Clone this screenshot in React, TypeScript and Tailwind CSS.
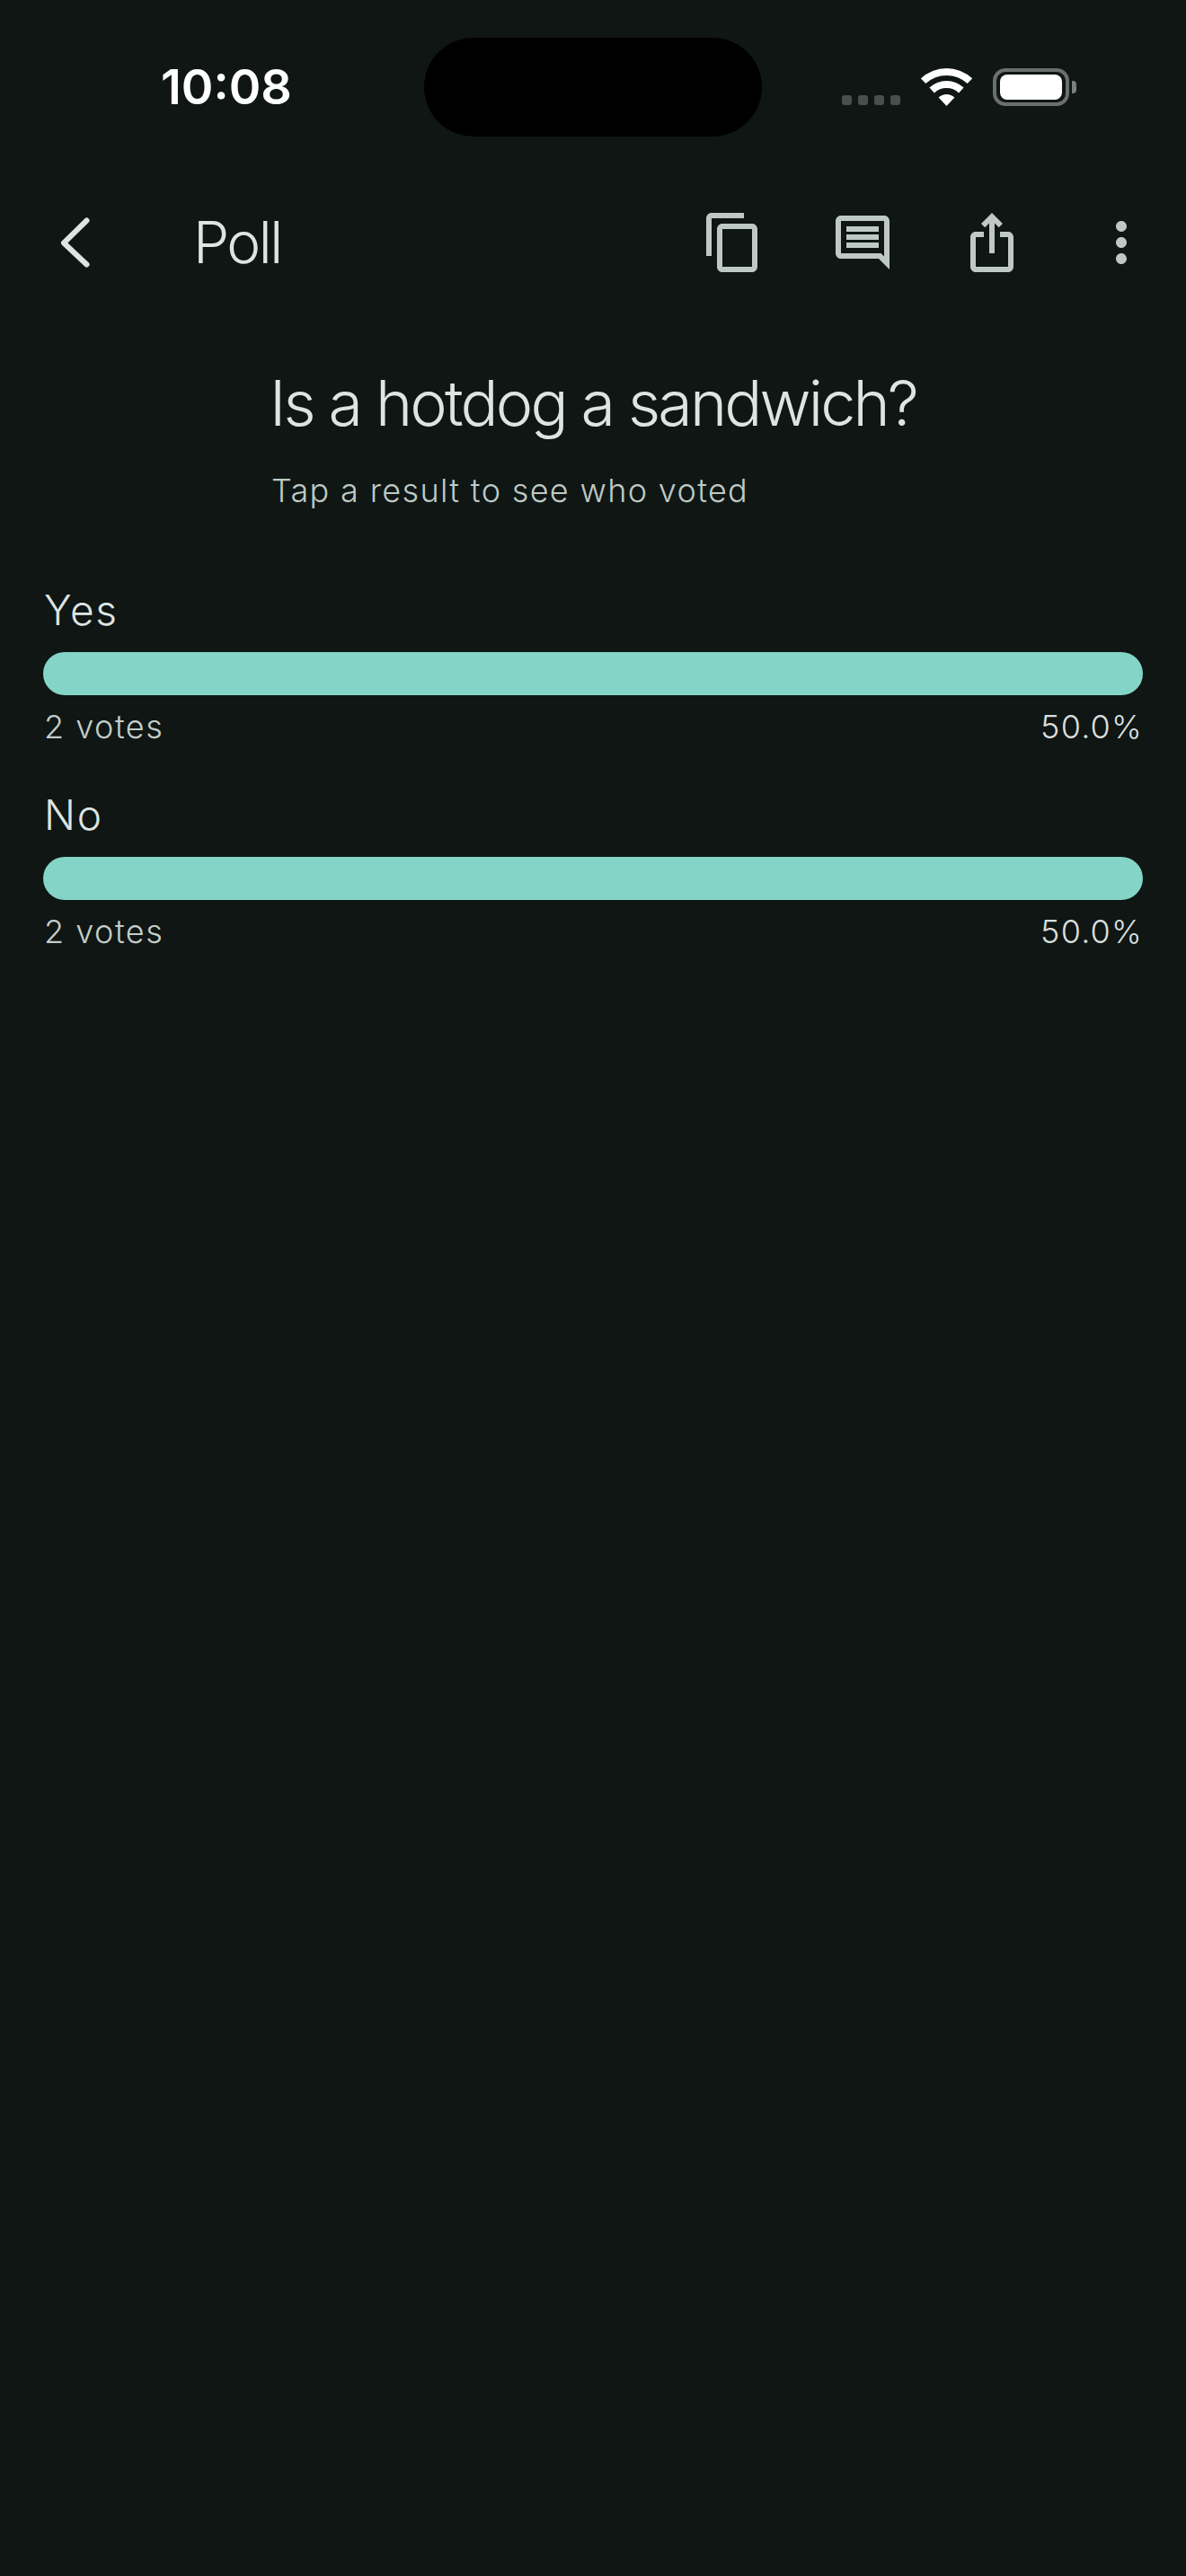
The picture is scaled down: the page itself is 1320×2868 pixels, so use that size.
const font = { fontFamily: "Inter, sans-serif" };

const Icon = ({ d }: { d: string }) => (
  <svg width="72" height="72" viewBox="0 0 24 24" fill="#bec9c4" className="shrink-0">
    <path d={d} />
  </svg>
);

const Wifi = () => (
  <svg width="57" height="42" viewBox="0 0 57 42" fill="#ffffff">
    <path d="M-0.1 11.3A42 42 0 0 1 57.1 11.3L51.7 17.1A34 34 0 0 0 5.3 17.1Z" />
    <path d="M9.4 21.5A28 28 0 0 1 47.6 21.5L42.1 27.4A20 20 0 0 0 14.9 27.4Z" />
    <path d="M19.6 32.5A13 13 0 0 1 37.4 32.5L28.5 42Z" />
  </svg>
);

const StatusBar = () => (
  <div className="flex h-[110px] items-center">
    <div className="w-[472px] pl-[179px] text-[54px] leading-[64px] font-semibold text-white">10:08</div>
    <div className="h-[110px] w-[376px] rounded-[55px] bg-black" />
    <div className="ml-[89px] flex h-[42px] items-end">
      <div className="mb-px flex gap-[7px]">
        <div className="size-[11px] rounded-[3px] bg-[#4a4f4d]" />
        <div className="size-[11px] rounded-[3px] bg-[#4a4f4d]" />
        <div className="size-[11px] rounded-[3px] bg-[#4a4f4d]" />
        <div className="size-[11px] rounded-[3px] bg-[#4a4f4d]" />
      </div>
      <div className="ml-[23px]">
        <Wifi />
      </div>
      <div className="ml-[23px] flex h-[42px] items-center">
        <div className="flex h-[42px] w-[85px] items-center justify-center rounded-[14px] border-4 border-[#6b6f6e]">
          <div className="h-[28px] w-[69px] rounded-[8px] bg-white" />
        </div>
        <div className="ml-[3px] h-[14px] w-[5px] rounded-r-[4px] bg-[#7b7f7e]" />
      </div>
    </div>
  </div>
);

const NavBar = () => (
  <div className="mt-[82px] flex h-[72px] items-center pl-[48px] pr-[36px]">
    <svg width="72" height="72" viewBox="0 0 72 72" fill="none" stroke="#dee4e1" strokeWidth="6" strokeLinecap="round" strokeLinejoin="round">
      <path d="M48.500 11.500L23 36.500L48.500 60.500" />
    </svg>
    <div className="ml-[95px] flex-1 text-[64px] leading-[72px] font-light tracking-[-2.500px] text-[#dee4e1]">Poll</div>
    <div className="flex gap-[72px]">
      <Icon d="M16 1H4c-1.100 0-2 .9-2 2v14h2V3h12V1zm3 4H8c-1.100 0-2 .9-2 2v14c0 1.100.9 2 2 2h11c1.100 0 2-.9 2-2V7c0-1.100-.9-2-2-2zm0 16H8V7h11v14z" />
      <Icon d="M20 17.170L18.830 16H4V4h16v13.170zM20 2H4c-1.100 0-2 .9-2 2v12c0 1.100.9 2 2 2h14l4 4V4c0-1.100-.9-2-2-2zM6 12h12v2H6zm0-3h12v2H6zm0-3h12v2H6z" />
      <Icon d="M16 5l-1.420 1.420-1.590-1.590V16h-1.980V4.830L9.420 6.420 8 5l4-4 4 4zm4 5v11c0 1.100-.9 2-2 2H6c-1.110 0-2-.9-2-2V10c0-1.110.89-2 2-2h3v2H6v11h12V10h-3V8h3c1.100 0 2 .89 2 2z" />
      <Icon d="M12 8c1.100 0 2-.9 2-2s-.9-2-2-2-2 .9-2 2 .9 2 2 2zm0 2c-1.100 0-2 .9-2 2s.9 2 2 2 2-.9 2-2-.9-2-2-2zm0 6c-1.100 0-2 .9-2 2s.9 2 2 2 2-.9 2-2-.9-2-2-2z" />
    </div>
  </div>
);

const Option = ({ label, className }: { label: string; className: string }) => (
  <div className={className}>
    <div className="pl-[1px] text-[46px] leading-[56px] font-light tracking-[1.800px] text-[#dee4e1]">{label}</div>
    <div className="mt-[19px] h-[48px] rounded-full bg-[#84d5c8]" />
    <div className="mt-[13px] flex justify-between pl-[1px] text-[36px] leading-[44px] font-light">
      <span className="tracking-[1.500px] text-[#c4cdc9]">2 votes</span>
      <span className="tracking-[1.200px] text-[#d9dfdc]">50.0%</span>
    </div>
  </div>
);

export default function App() {
  return (
    <div className="min-h-[2868px] bg-[#0f1614] pt-[42px]" style={font}>
      <StatusBar />
      <NavBar />

      <div className="mx-auto mt-[101px] w-fit">
        <h1 className="text-[70px] leading-[84px] font-light tracking-[-2.850px] text-[#dee4e1]">Is a hotdog a sandwich?</h1>
        <p className="mt-[31px] pl-[2px] text-[36px] leading-[48px] font-light tracking-[1.330px] text-[#bec9c4]">Tap a result to see who voted</p>
      </div>

      <div className="px-[48px]">
        <Option label="Yes" className="mt-[81px]" />
        <Option label="No" className="mt-[48px]" />
      </div>
    </div>
  );
}
